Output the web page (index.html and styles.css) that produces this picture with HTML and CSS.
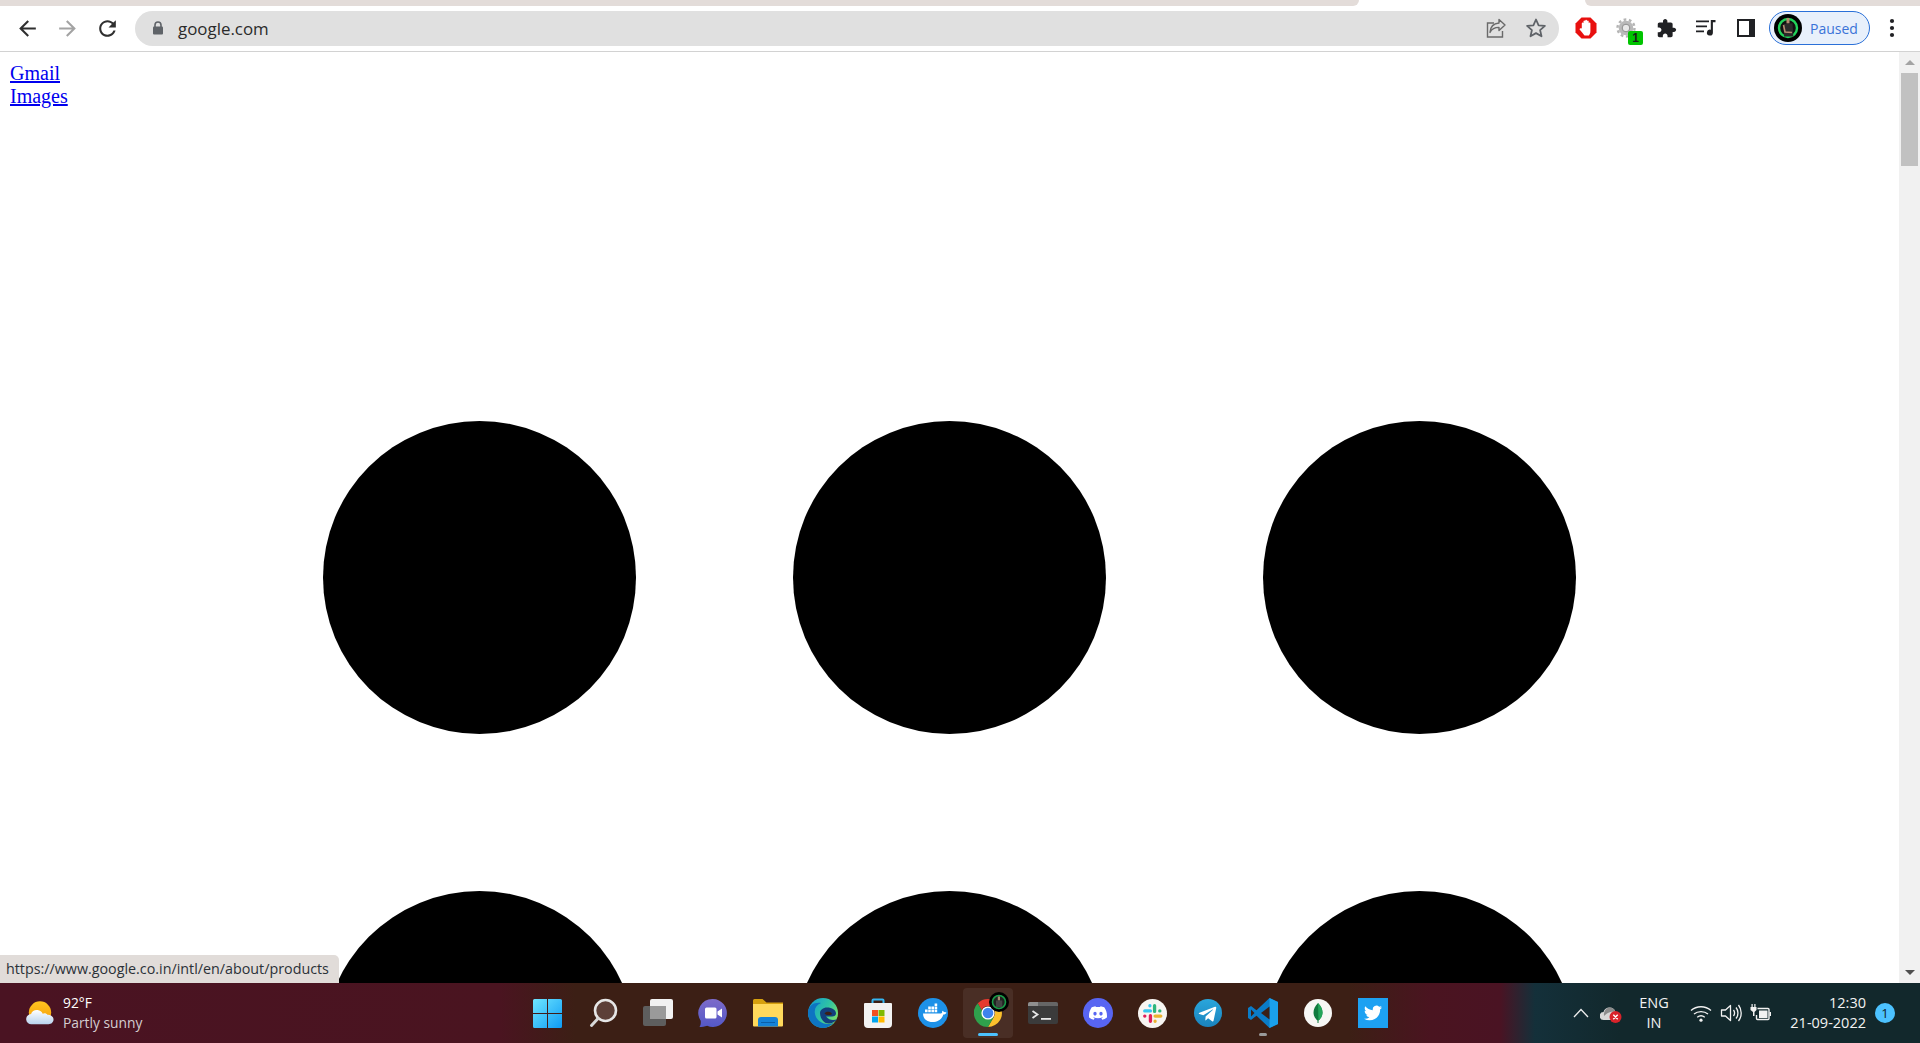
FILE: index.html
```html
<!DOCTYPE html>
<html lang="en">
<head>
<meta charset="utf-8">
<title>google.com</title>
<link rel="stylesheet" href="styles.css">
</head>
<body>
<div class="chrome">
  <div class="tabstrip"><div class="tab-left"></div><div class="tab-gap"></div><div class="tab-right"></div></div>
  <div class="toolbar">
    <div class="nav">
      <span class="tbtn"><svg class="i25" viewBox="0 0 24 24"><path class="f-dark" d="M20 11H7.830l5.590-5.590L12 4l-8 8 8 8 1.410-1.410L7.830 13H20z"/></svg></span>
      <span class="tbtn"><svg class="i25" viewBox="0 0 24 24"><path class="f-dim" d="M4 11h12.170l-5.590-5.590L12 4l8 8-8 8-1.410-1.410L16.170 13H4z"/></svg></span>
      <span class="tbtn"><svg class="i25" viewBox="0 0 24 24"><path class="f-dark" d="M17.650 6.350C16.200 4.900 14.210 4 12 4c-4.420 0-7.990 3.580-7.990 8s3.570 8 7.990 8c3.730 0 6.840-2.550 7.730-6h-2.080c-.82 2.330-3.040 4-5.650 4-3.310 0-6-2.690-6-6s2.690-6 6-6c1.660 0 3.140.69 4.220 1.780L13 11h7V4l-2.350 2.350z"/></svg></span>
    </div>
    <div class="omnibox">
      <svg class="lock" viewBox="0 0 12 14"><path fill="none" stroke="#5f6368" stroke-width="1.600" d="M3 6V4a3 3 0 0 1 6 0v2"/><rect x="1" y="5.500" width="10" height="8" rx="1" fill="#5f6368"/></svg>
      <span class="url">google.com</span>
      <span class="omni-actions">
        <span class="omni-btn"><svg class="i22" viewBox="0 0 22 22"><path fill="none" stroke="#6a6a6a" stroke-width="1.400" d="M9 6H2.500v14h15v-6"/><path fill="none" stroke="#6a6a6a" stroke-width="1.400" stroke-linejoin="round" d="M14 2.500l6 5.500-6 5.500V10.400c-4 0-7 1-9 5 .4-5.600 4-9 9-9.400z"/></svg></span>
        <span class="omni-btn"><svg class="i22" viewBox="0 0 22 22"><path fill="none" stroke="#5f6368" stroke-width="1.800" stroke-linejoin="round" d="M11 2.500l2.600 5.800 6.300.6-4.800 4.200 1.400 6.200L11 16.100l-5.500 3.200 1.400-6.200L2.100 8.900l6.300-.6z"/></svg></span>
      </span>
    </div>
    <div class="exts">
      <span class="tbtn"><svg class="i22" viewBox="0 0 22 22"><path fill="#e8100f" d="M6.500 0.500h9l6 6v9l-6 6h-9l-6-6v-9z"/><path fill="#fff" d="M6.800 11V6.200c0-1.100 1.700-1.100 1.700 0V4.300c0-1.100 1.700-1.100 1.700 0V3.500c0-1.100 1.800-1.100 1.800 0v.9c0-1.100 1.700-1.100 1.700 0v1.800c0-1 1.700-1 1.700 0v7.800c0 2-.6 3.300-1.500 4.500H9.500C8.300 17 6.500 15 4.800 12.800c-.8-1.200.8-2.300 1.500-1.200z"/></svg></span>
      <span class="tbtn">
        <span class="ext-gear">
          <svg class="i20" viewBox="0 0 20 20"><circle cx="10" cy="10" r="7.300" fill="#b9b9b9"/><circle cx="10" cy="10" r="8.500" fill="none" stroke="#b4b4b4" stroke-width="2.400" stroke-dasharray="2.700 2.640"/><circle cx="10" cy="10" r="3.800" fill="#e8e8e8" stroke="#8e8e8e" stroke-width="1"/></svg>
          <span class="badge">1</span>
        </span>
      </span>
      <span class="tbtn"><svg class="i21" viewBox="0 0 24 24"><path fill="#202124" d="M20.500 11H19V7c0-1.100-.9-2-2-2h-4V3.500C13 2.120 11.880 1 10.500 1S8 2.120 8 3.500V5H4c-1.100 0-1.990.9-1.990 2v3.800H3.500c1.490 0 2.700 1.210 2.700 2.700s-1.210 2.700-2.700 2.700H2V20c0 1.100.9 2 2 2h3.800v-1.500c0-1.490 1.210-2.700 2.700-2.700 1.490 0 2.700 1.210 2.700 2.700V22H17c1.100 0 2-.9 2-2v-4h1.500c1.380 0 2.500-1.120 2.500-2.500S21.880 11 20.500 11z"/></svg></span>
      <span class="tbtn"><svg class="i22" viewBox="0 0 22 22"><path fill="#202124" d="M1 3.500h13v1.700H1zM1 8.500h11v1.700H1zM1 13.500h8v1.700H1z"/><path fill="#202124" d="M15.800 3h4.700v2.200h-2.600v10.300a3 3 0 1 1-2.100-2.800z"/></svg></span>
      <span class="tbtn"><svg class="i18" viewBox="0 0 18 18"><rect width="18" height="18" fill="#202124"/><rect x="2" y="2" width="10" height="14" fill="#fff"/></svg></span>
    </div>
    <div class="profile">
      <svg class="avatar" viewBox="0 0 28 28"><circle cx="14" cy="14" r="14" fill="#000"/><circle cx="14" cy="14" r="9" fill="#111" stroke="#22d35a" stroke-width="2.400"/><path fill="#b58b70" d="M12.500 4h3v5.500h-3z"/><path fill="#2b2b2b" d="M9.500 10l9-.8.8 13.300H10z"/><path fill="none" stroke="#b58b70" stroke-width="1.600" d="M9.500 11l1.500 7 7 .5"/></svg>
      <span class="paused">Paused</span>
    </div>
    <span class="more"><svg class="dots" viewBox="0 0 6 20"><circle cx="3" cy="3" r="2.100"/><circle cx="3" cy="10" r="2.100"/><circle cx="3" cy="17" r="2.100"/></svg></span>
  </div>
</div>

<div class="viewport">
  <main class="page">
    <div class="links">
      <a href="#">Gmail</a><br>
      <a href="#">Images</a>
    </div>
    <div class="dots-grid">
      <div class="disc"></div><div class="disc"></div><div class="disc"></div>
      <div class="disc"></div><div class="disc"></div><div class="disc"></div>
    </div>
    <div class="status">https://www.google.co.in/intl/en/about/products</div>
  </main>
  <div class="scrollbar">
    <span class="arrow-up"></span>
    <span class="thumb"></span>
    <span class="arrow-down"></span>
  </div>
</div>

<footer class="taskbar">
  <div class="weather">
    <svg class="weather-icon" viewBox="0 0 30 26"><defs><linearGradient id="sun" x1="0" y1="0" x2="0" y2="1"><stop offset="0" stop-color="#ffc41f"/><stop offset="1" stop-color="#f59a0a"/></linearGradient><linearGradient id="cld" x1="0" y1="0" x2="0" y2="1"><stop offset="0" stop-color="#fff"/><stop offset="1" stop-color="#b9d3ee"/></linearGradient></defs><circle cx="15" cy="12" r="12" fill="url(#sun)"/><path fill="url(#cld)" d="M6 24.500a5.500 5.500 0 0 1-.6-11c1-3 3.800-4.600 7-4.200 2.600.3 4.600 1.800 5.500 4 1.400-1 4-.8 5 1.100 3.500-.4 6.600 2 6.600 5.100 0 2.800-2.200 5-5.400 5z"/></svg>
    <div class="weather-text">
      <div class="temp">92°F</div>
      <div class="cond">Partly sunny</div>
    </div>
  </div>
  <div class="tasks">
    <span class="task"><svg class="i29" viewBox="0 0 29 29"><defs><linearGradient id="win" x1="0" y1="0" x2="1" y2="1"><stop offset="0" stop-color="#6fe6ff"/><stop offset="1" stop-color="#0e9bf5"/></linearGradient></defs><path fill="url(#win)" d="M1.500 0H14v14H0V1.500A1.500 1.500 0 0 1 1.500 0zM15 0h12.500A1.500 1.500 0 0 1 29 1.500V14H15zM0 15h14v14H1.500A1.500 1.500 0 0 1 0 27.500zM15 15h14v12.500a1.500 1.500 0 0 1-1.500 1.500H15z"/></svg></span>
    <span class="task"><svg class="i30" viewBox="0 0 30 30"><circle cx="17.500" cy="12.500" r="10.500" fill="#5c3f38" stroke="#e6e6e6" stroke-width="2.600"/><path stroke="#d8d8d8" stroke-width="3" stroke-linecap="round" fill="none" d="M10 20.500l-6.500 7"/></svg></span>
    <span class="task"><svg class="i30" viewBox="0 0 30 30"><rect x="0" y="8" width="23" height="20" rx="2" fill="#5e5e5e"/><rect x="7" y="1" width="23" height="20" rx="2" fill="#f2f2f2"/><rect x="7" y="8" width="16" height="13" fill="#9a9a9a"/></svg></span>
    <span class="task"><svg class="i30" viewBox="0 0 30 30"><defs><linearGradient id="meet" x1="0" y1="0" x2="0" y2="1"><stop offset="0" stop-color="#7c6bc9"/><stop offset="1" stop-color="#5458c8"/></linearGradient></defs><path fill="url(#meet)" d="M15 1a14 14 0 1 1-5.800 26.800C7 28.800 3.500 29 1.500 29c1-1.500 1.500-3.500 1.200-6.300A14 14 0 0 1 15 1z"/><rect x="7" y="9.500" width="11.500" height="11" rx="1.500" fill="#fff"/><path fill="#fff" d="M19.500 13.500l4.500-3v9l-4.500-3z"/></svg></span>
    <span class="task"><svg class="i30" viewBox="0 0 30 30"><path fill="#d6a00e" d="M0 2.500A1.500 1.500 0 0 1 1.500 1h8l4 3.500H30V12H0z"/><path fill="#ffd95c" d="M0 6h30v21.500a1 1 0 0 1-1 1H1a1 1 0 0 1-1-1z"/><path fill="#1583d8" d="M5 28.500V22a3 3 0 0 1 3-3h14a3 3 0 0 1 3 3v6.500z"/><path fill="#0b5fa8" d="M8 24h14v1H8z"/></svg></span>
    <span class="task"><svg class="i30" viewBox="0 0 30 30"><defs><linearGradient id="edg" x1="0" y1="0" x2="1" y2=".6"><stop offset="0" stop-color="#1098d8"/><stop offset=".6" stop-color="#2fc3a4"/><stop offset="1" stop-color="#78e06c"/></linearGradient></defs><circle cx="15" cy="15" r="15" fill="url(#edg)"/><path fill="#0e74c2" d="M0 15C0 7 7 4 13 5c-5 2-7 6-6 11 1 6 7 10 13 10 2 0 4-.5 6-1.500C23 28 19 30 15 30 6.500 30 0 23 0 15z"/><path fill="#123f7d" d="M12 15c0-3 3-5.500 7-5.500 5 0 9 2.500 9 6 0 1.800-1.600 3-4 3h-6c2 2.500 4.500 3.500 7 3.500 1.500 0 3-.3 4.200-1-2 2.800-5 4.500-8.500 4.500C15.500 25.500 12 20 12 15z"/><path fill="#3c1f16" d="M16.500 15.500c1-2 5-2.300 7-.5 1 1-.3 2-2 2-2.500 0-4-.3-5-1.500z"/></svg></span>
    <span class="task"><svg class="i30" viewBox="0 0 30 30"><path fill="none" stroke="#35b6f2" stroke-width="2" d="M9.500 6V2.500a1 1 0 0 1 1-1h9a1 1 0 0 1 1 1V6"/><path fill="#f2f2f2" d="M2 5h26a1 1 0 0 1 1 1v20a4 4 0 0 1-4 4H5a4 4 0 0 1-4-4V6a1 1 0 0 1 1-1z"/><rect x="9" y="12" width="6" height="6" fill="#f25022"/><rect x="15.500" y="12" width="6" height="6" fill="#7fba00"/><rect x="9" y="18.500" width="6" height="6" fill="#00a4ef"/><rect x="15.500" y="18.500" width="6" height="6" fill="#ffb900"/></svg></span>
    <span class="task"><svg class="i30" viewBox="0 0 30 30"><circle cx="15" cy="15" r="15" fill="#1d91e8"/><path fill="#fff" d="M5 15.500h18c1 0 1.500-1.500 1-2.800 1 .2 1.800.8 2.100 1.500 1-.2 1.900 0 2.400.5-.8 1.500-2 1.800-3.200 1.700C23.800 21.500 19.500 24 14.500 24 8.500 24 5 20.500 5 15.500z"/><path fill="#fff" d="M7 11.500h2.600v2.800H7zM10.200 11.500h2.600v2.800h-2.600zM13.400 11.500H16v2.800h-2.600zM16.600 11.500h2.600v2.800h-2.600zM10.200 8.400h2.600v2.600h-2.600zM13.400 8.400H16v2.600h-2.600zM16.600 8.400h2.600v2.600h-2.600zM16.600 5.400h2.600V8h-2.600z"/></svg></span>
    <span class="task">
      <span class="task-highlight"></span>
      <svg class="i28 chrome-logo" viewBox="0 0 28 28"><path fill="#e53a30" d="M14 0a14 14 0 0 1 12.100 7H14a7 7 0 0 0-6.400 4.200L3.800 4.300A14 14 0 0 1 14 0z"/><path fill="#fbc02d" d="M26.100 7A14 14 0 0 1 14 28l6-10.500A7 7 0 0 0 20 10.500 7 7 0 0 0 18 7z"/><path fill="#2fa04c" d="M3.800 4.300l6 10.700a7 7 0 0 0 10.300 2.500L14 28A14 14 0 0 1 3.800 4.300z"/><circle cx="14" cy="14" r="6.600" fill="#fff"/><circle cx="14" cy="14" r="5.300" fill="#3e83ee"/></svg>
      <svg class="chrome-badge" viewBox="0 0 20 20"><circle cx="10" cy="10" r="10" fill="#000"/><circle cx="10" cy="10" r="6.500" fill="#222" stroke="#1a9c48" stroke-width="1.600"/><path fill="#a98b72" d="M8.800 4.500h2.200v4H8.800z"/><path fill="#444" d="M7 8.500h6.300v6.500H7z"/></svg>
      <span class="running"></span>
    </span>
    <span class="task"><svg class="i30" viewBox="0 0 30 22"><rect width="30" height="22" rx="2" fill="#3b3b3b"/><path fill="#8f8f8f" d="M2 0h8v4H0V2a2 2 0 0 1 2-2z"/><path fill="#666" d="M10 0h18a2 2 0 0 1 2 2v2H10z"/><path fill="none" stroke="#e8e8e8" stroke-width="1.800" d="M4.500 9l5 3.500-5 3.500"/><path fill="#e8e8e8" d="M13 16h10v1.800H13z"/></svg></span>
    <span class="task"><svg class="i30" viewBox="0 0 30 30"><circle cx="15" cy="15" r="15" fill="#5865f2"/><path transform="translate(6 6) scale(.75)" fill="#fff" d="M20.317 4.3698a19.7913 19.7913 0 00-4.8851-1.5152.0741.0741 0 00-.0785.0371c-.211.3753-.4447.8648-.6083 1.2495-1.8447-.2762-3.68-.2762-5.4868 0-.1636-.3933-.4058-.8742-.6177-1.2495a.077.077 0 00-.0785-.037 19.7363 19.7363 0 00-4.8852 1.515.0699.0699 0 00-.0321.0277C.5334 9.0458-.319 13.5799.0992 18.0578a.0824.0824 0 00.0312.0561c2.0528 1.5076 4.0413 2.4228 5.9929 3.0294a.0777.0777 0 00.0842-.0276c.4616-.6304.8731-1.2952 1.226-1.9942a.076.076 0 00-.0416-.1057c-.6528-.2476-1.2743-.5495-1.8722-.8923a.077.077 0 01-.0076-.1277c.1258-.0943.2517-.1923.3718-.2914a.0743.0743 0 01.0776-.0105c3.9278 1.7933 8.18 1.7933 12.0614 0a.0739.0739 0 01.0785.0095c.1202.099.246.1981.3728.2924a.077.077 0 01-.0066.1276 12.2986 12.2986 0 01-1.873.8914.0766.0766 0 00-.0407.1067c.3604.698.7719 1.3628 1.225 1.9932a.076.076 0 00.0842.0286c1.961-.6067 3.9495-1.5219 6.0023-3.0294a.077.077 0 00.0313-.0552c.5004-5.177-.8382-9.6739-3.5485-13.6604a.061.061 0 00-.0312-.0286zM8.02 15.3312c-1.1825 0-2.1569-1.0857-2.1569-2.419 0-1.3332.9555-2.4189 2.157-2.4189 1.2108 0 2.1757 1.0952 2.1568 2.419 0 1.3332-.9555 2.4189-2.1569 2.4189zm7.9748 0c-1.1825 0-2.1569-1.0857-2.1569-2.419 0-1.3332.9554-2.4189 2.1569-2.4189 1.2108 0 2.1757 1.0952 2.1568 2.419 0 1.3332-.946 2.4189-2.1568 2.4189Z"/></svg></span>
    <span class="task"><svg class="i29" viewBox="0 0 28 28"><circle cx="14" cy="14" r="14" fill="#f7f5f2"/><g stroke-width="3.200" stroke-linecap="round" fill="none"><path stroke="#36c5f0" d="M6.500 11.500H12M11.500 6.500v.1"/><path stroke="#2eb67d" d="M16 6.500V12M21 11.500h.1"/><path stroke="#ecb22e" d="M16.500 16.500H22M16.500 21.500v.1"/><path stroke="#e01e5a" d="M12 16v5.500M6.500 16.500h.1"/></g></svg></span>
    <span class="task"><svg class="i28" viewBox="0 0 28 28"><defs><linearGradient id="tg" x1="0" y1="0" x2="0" y2="1"><stop offset="0" stop-color="#2aa6dc"/><stop offset="1" stop-color="#1a83bd"/></linearGradient></defs><circle cx="14" cy="14" r="14" fill="url(#tg)"/><path fill="#fff" d="M5.500 13.800l15.500-6c.8-.3 1.500.2 1.200 1.400l-2.600 12.300c-.2.900-.7 1.100-1.500.7l-4-3-2 1.900c-.2.200-.4.400-.8.400l.3-4.100 7.400-6.700c.3-.3-.1-.4-.5-.2l-9.200 5.800-3.900-1.200c-.9-.3-.9-.9.100-1.300z"/></svg></span>
    <span class="task task-open"><svg class="i30" viewBox="0 0 30 30"><path fill="#0a7cc8" d="M21.500 0L30 4v22l-8.500 4-13-12.300L3 22 0 20V10l3-2 5.500 4.300z"/><path fill="#3b2016" d="M3 11.500V18.500L6.500 15z"/><path fill="#1aa0ec" d="M21.500 0L30 4v22l-8.500 4z"/><path fill="#3b2016" d="M21.500 8.500v13L13 15z"/></svg></span>
    <span class="task"><svg class="i28" viewBox="0 0 28 28"><circle cx="14" cy="14" r="14" fill="#f7f7f5"/><path fill="#0f7a3e" d="M14 4c2.800 3 4.500 6 4.500 9.500S16.500 20 14.500 21.500V24h-1v-2.500C11.500 20 9.500 17 9.500 13.500S11.200 7 14 4z"/><path fill="#23a55a" d="M14 4c2.800 3 4.500 6 4.500 9.500S16.500 20 14.500 21.500z"/></svg></span>
    <span class="task"><svg class="i30" viewBox="0 0 30 30"><rect width="30" height="30" fill="#1da1f2"/><path transform="translate(6 6) scale(.75)" fill="#fff" d="M23.953 4.570a10 10 0 01-2.825.775 4.958 4.958 0 002.163-2.723c-.951.555-2.005.959-3.127 1.184a4.920 4.920 0 00-8.384 4.482C7.690 8.095 4.067 6.130 1.640 3.162a4.822 4.822 0 00-.666 2.475c0 1.710.870 3.213 2.188 4.096a4.904 4.904 0 01-2.228-.616v.060a4.923 4.923 0 003.946 4.827 4.996 4.996 0 01-2.212.085 4.936 4.936 0 004.604 3.417 9.867 9.867 0 01-6.102 2.105c-.390 0-.779-.023-1.170-.067a13.995 13.995 0 007.557 2.209c9.053 0 13.998-7.496 13.998-13.985 0-.210 0-.420-.015-.630A9.935 9.935 0 0024 4.590z"/></svg></span>
  </div>
  <div class="tray">
    <span class="tray-item t30"><svg class="i16" viewBox="0 0 16 16"><path fill="none" stroke="#eee" stroke-width="1.300" d="M1 12l7-7.500 7 7.500"/></svg></span>
    <span class="tray-item t30"><svg class="i22" viewBox="0 0 22 22"><path fill="#d8d8d8" d="M4 18a4 4 0 0 1-.5-8c.8-3 3-4.500 6-4.500 3 0 5.300 1.600 6 4.500 1.800 0 3.500 1.500 3.500 4 0 2.500-2 4-4 4z"/><path fill="#8c8c8c" d="M9.500 5.500c3 0 5.300 1.600 6 4.500-3-.5-6-.2-8.500 1.500-1.200.8-2 1.500-3 2.500-.2-2 0-3.500.7-5 1.300-2 3-3.500 4.800-3.500z"/><circle cx="15.500" cy="15" r="6" fill="#d8232a"/><path stroke="#fff" stroke-width="1.400" d="M13.300 12.800l4.400 4.400M17.700 12.800l-4.400 4.400"/></svg></span>
    <span class="tray-item lang"><span>ENG</span><span>IN</span></span>
    <span class="tray-item t30"><svg class="i22" viewBox="0 0 22 22"><g fill="none" stroke="#f2f2f2" stroke-width="1.300"><path d="M1 8.500c5.500-5 14.500-5 20 0"/><path d="M4 12c3.800-3.200 10.200-3.200 14 0"/><path d="M7.200 15.200c2.200-1.700 5.400-1.700 7.600 0"/></g><circle cx="11" cy="18.200" r="1.600" fill="#f2f2f2"/></svg></span>
    <span class="tray-item t29"><svg class="i22" viewBox="0 0 22 22"><path fill="none" stroke="#f2f2f2" stroke-width="1.300" stroke-linejoin="round" d="M1.500 8v6h4l5 4.500v-15l-5 4.500z"/><path fill="none" stroke="#f2f2f2" stroke-width="1.300" d="M13.500 8c1.300 1.800 1.300 4.200 0 6M16 5.500c2.600 3.200 2.600 7.800 0 11M18.500 3c3.600 4.800 3.600 11.200 0 16"/></svg></span>
    <span class="tray-item t31"><svg class="i22" viewBox="0 0 22 22"><path fill="none" stroke="#f2f2f2" stroke-width="1.400" d="M7.500 6.500h10.500a1 1 0 0 1 1 1v9a1 1 0 0 1-1 1H7.500a1 1 0 0 1-1-1V13"/><path fill="#f2f2f2" d="M9 8.500h8.500v7.500H9zM19.500 10H21v4h-1.500zM1.500 2h1.200v3H1.500zM4.300 2h1.200v3H4.300zM.5 5H6.500v3L4.500 10v4H3v-4L.5 8z"/></svg></span>
    <span class="clock"><span>12:30</span><span>21-09-2022</span></span>
    <span class="notif">1</span>
  </div>
</footer>
</body>
</html>
```
FILE: styles.css
```css
* { box-sizing: border-box; }
html, body { height: 100%; }
body {
  margin: 0;
  height: 1043px;
  overflow: hidden;
  display: flex;
  flex-direction: column;
  background: #fff;
  font-family: "Open Sans", "Noto Sans", sans-serif;
}
svg { display: block; flex: none; }
.i16 { width: 16px; height: 16px; }
.i18 { width: 18px; height: 18px; }
.i20 { width: 20px; height: 20px; }
.i21 { width: 21px; height: 21px; }
.i22 { width: 22px; height: 22px; }
.i25 { width: 25px; height: 25px; }
.i28 { width: 28px; height: 28px; }
.i29 { width: 29px; height: 29px; }
.i30 { width: 30px; height: 30px; }
.f-dark { fill: #2f2f2f; }
.f-dim { fill: #a3a3a3; }

/* browser chrome */
.chrome { flex: none; }
.tabstrip { display: flex; height: 6px; background: #fff; }
.tab-left { width: 1359px; background: #e3dcd9; border-bottom-right-radius: 8px; }
.tab-gap { width: 226px; }
.tab-right { flex: 1; background: #e3dcd9; border-bottom-left-radius: 8px; }
.toolbar {
  display: flex;
  align-items: center;
  height: 46px;
  padding: 0 17px 1px 7px;
  background: #fff;
  border-bottom: 1px solid #d2d2d2;
}
.nav, .exts { display: flex; flex: none; }
.tbtn {
  display: flex;
  align-items: center;
  justify-content: center;
  width: 40px;
  height: 34px;
}
.omnibox {
  flex: 1;
  display: flex;
  align-items: center;
  height: 35px;
  margin: 0 7px 0 8px;
  padding: 0 3px 0 17px;
  border-radius: 18px;
  background: #e0e0e0;
}
.lock { width: 12px; height: 14px; flex: none; }
.url { margin-left: 14px; font-size: 16.9px; color: #2b2b2b; }
.omni-actions { display: flex; margin-left: auto; }
.omni-btn { display: flex; align-items: center; justify-content: center; width: 40px; height: 32px; }
.ext-gear { position: relative; display: block; width: 20px; height: 20px; }
.badge {
  position: absolute;
  left: 12px;
  top: 13px;
  width: 15px;
  height: 14px;
  border-radius: 2px;
  background: #00c400;
  color: #1a1a1a;
  font: bold 12px/15px "Liberation Sans", sans-serif;
  text-align: center;
}
.profile {
  display: flex;
  align-items: center;
  flex: none;
  width: 101px;
  height: 34px;
  margin-left: 3px;
  padding-left: 4px;
  border: 1.5px solid #2a70d8;
  border-radius: 17px;
  background: #e8f0fb;
}
.avatar { width: 28px; height: 28px; }
.paused { margin-left: 8px; font-size: 14px; color: #3a73d8; }
.more { display: flex; justify-content: center; flex: none; width: 22px; margin-left: 11px; }
.dots { width: 6px; height: 20px; fill: #202124; }

/* page */
.viewport { flex: 1; display: flex; min-height: 0; }
.page {
  position: relative;
  flex: 1;
  overflow: hidden;
  padding: 10px 0 0 10px;
  background: #fff;
}
.links { font: 20px/23px "Liberation Serif", serif; }
.links a { color: #0000ee; }
.dots-grid {
  display: grid;
  grid-template-columns: repeat(3, 313px);
  gap: 157px;
  margin: 313px 0 0 313px;
}
.disc { width: 313px; height: 313px; border-radius: 50%; background: #000; }
.status {
  position: absolute;
  left: 0;
  bottom: 0;
  width: 339px;
  height: 28px;
  padding-left: 6px;
  border-top-right-radius: 5px;
  background: #e1dcd9;
  color: #2b3138;
  font-size: 14.3px;
  line-height: 28px;
  white-space: nowrap;
}
.scrollbar {
  flex: none;
  display: flex;
  flex-direction: column;
  align-items: center;
  width: 21px;
  padding: 8px 0 8px;
  background: #f1f1f1;
}
.arrow-up { width: 0; height: 0; border: 5px solid transparent; border-top: 0; border-bottom: 5px solid #a3a3a3; }
.thumb { width: 17px; height: 93px; margin-top: 8px; background: #c1c1c1; }
.arrow-down { width: 0; height: 0; margin-top: auto; border: 5px solid transparent; border-bottom: 0; border-top: 5px solid #505050; }

/* taskbar */
.taskbar {
  flex: none;
  display: flex;
  align-items: center;
  height: 60px;
  background: linear-gradient(90deg, #4a1322 0, #4a1420 500px, #3c1f15 575px, #3c1f15 1350px, #4a1420 1430px, #4a1323 1500px, #14303a 1535px, #12282c 1620px, #12282c 100%);
  color: #fff;
}
.weather { display: flex; align-items: center; flex: none; width: 520px; padding-left: 26px; }
.weather-icon { width: 28px; height: 25px; }
.weather-text { margin-left: 9px; font-size: 13.8px; line-height: 20px; }
.temp { color: #fff; }
.cond { color: #d4cdd0; }
.tasks { display: flex; flex: none; }
.task {
  position: relative;
  display: flex;
  align-items: center;
  justify-content: center;
  width: 55px;
  height: 60px;
}
.task-highlight {
  position: absolute;
  left: 3px;
  top: 5px;
  width: 50px;
  height: 50px;
  border-radius: 4px;
  background: rgba(255, 255, 255, .07);
}
.chrome-logo { position: relative; }
.chrome-badge { position: absolute; left: 29px; top: 9px; width: 20px; height: 20px; }
.running {
  position: absolute;
  left: 18px;
  top: 50px;
  width: 20px;
  height: 3px;
  border-radius: 2px;
  background: #4cc2ff;
}
.task-open::after {
  content: "";
  position: absolute;
  left: 24px;
  top: 50px;
  width: 8px;
  height: 3px;
  border-radius: 2px;
  background: #9a9a9a;
}
.tray { display: flex; align-items: center; flex: none; margin-left: auto; padding-right: 25px; }
.tray-item { display: flex; align-items: center; justify-content: center; height: 40px; }
.t29 { width: 29px; }
.t30 { width: 30px; }
.t31 { width: 31px; }
.lang, .clock { flex-direction: column; font-size: 14.5px; line-height: 20px; color: #f2f2f2; }
.lang { width: 56px; margin-right: 4px; }
.clock { display: flex; align-items: flex-end; width: 80px; margin-left: 10px; }
.notif {
  width: 20px;
  height: 20px;
  margin-left: 9px;
  border-radius: 50%;
  background: #4cc2ff;
  color: #10222b;
  font-size: 13px;
  line-height: 20px;
  text-align: center;
}
```
